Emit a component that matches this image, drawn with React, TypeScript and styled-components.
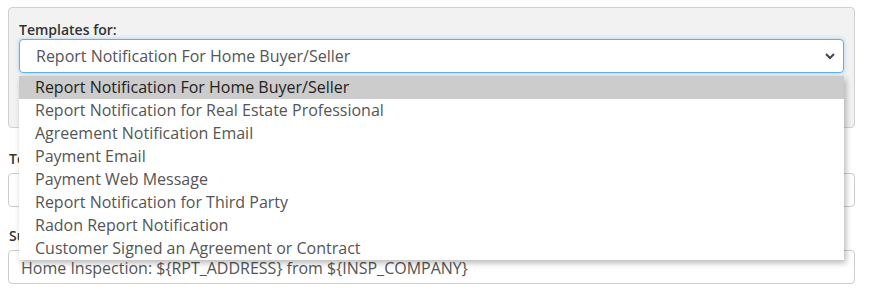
import React from "react";
import styled, { createGlobalStyle } from "styled-components";

const Global = createGlobalStyle`
  html, body { margin: 0; padding: 0; background: #fff; }
  body { font-family: "Open Sans", "Noto Sans", sans-serif; }
`;

const Page = styled.div`
  padding: 7px 27px 0 8px;
  display: flex;
  flex-direction: column;
`;

const Panel = styled.div`
  position: relative;
  background: #f2f2f2;
  border: 1px solid #d0d0d0;
  border-radius: 4px;
  padding: 13px 10px 0 10px;
  height: 106px;
  display: flex;
  flex-direction: column;
`;

const Label = styled.label`
  font-size: 14px;
  font-weight: 600;
  color: #333;
  line-height: 18px;
  margin-bottom: 0;
  display: block;
`;

const SelectBox = styled.div`
  height: 32px;
  border: 1px solid #66afe9;
  border-radius: 4px;
  background: #fff;
  box-shadow: 0 0 4px rgba(102, 175, 233, 0.5);
  display: flex;
  align-items: center;
  justify-content: space-between;
  padding: 0 8px 0 16px;
  font-size: 16px;
  color: #555;
`;

const Chevron = styled.svg`
  width: 10px;
  height: 8px;
`;

const Menu = styled.ul`
  position: absolute;
  left: 10px;
  right: 10px;
  top: 68px;
  margin: 0;
  padding: 0;
  list-style: none;
  background: #fff;
  box-shadow: 2px 3px 6px rgba(0, 0, 0, 0.28);
  z-index: 10;
`;

const Item = styled.li<{ $active?: boolean }>`
  height: 23px;
  line-height: 23px;
  padding-left: 16px;
  font-size: 16px;
  white-space: nowrap;
  color: ${(p) => (p.$active ? "#222" : "#555")};
  background: ${(p) => (p.$active ? "#cccccc" : "#fff")};
`;

const Field = styled.div<{ $gap: number }>`
  display: flex;
  flex-direction: column;
  margin-top: ${(p) => p.$gap}px;
`;

const FieldLabel = styled(Label)`
  margin: 0 0 5px 1px;
`;

const Input = styled.div`
  border: 1px solid #ccc;
  border-radius: 4px;
  background: #fff;
  display: flex;
  align-items: center;
  padding: 2px 12px 0;
  box-sizing: border-box;
  height: 34px;
  font-size: 16px;
  color: #555;
  white-space: nowrap;
`;

const items = [
  "Report Notification For Home Buyer/Seller",
  "Report Notification for Real Estate Professional",
  "Agreement Notification Email",
  "Payment Email",
  "Payment Web Message",
  "Report Notification for Third Party",
  "Radon Report Notification",
  "Customer Signed an Agreement or Contract",
];

export default function App() {
  return (
    <>
      <Global />
      <Page>
        <Panel>
          <Label>Templates for:</Label>
          <SelectBox>
            <span>Report Notification For Home Buyer/Seller</span>
            <Chevron viewBox="0 0 10 8">
              <path d="M1 2 L5 6 L9 2" fill="none" stroke="#444" strokeWidth="2" />
            </Chevron>
          </SelectBox>
          <Menu>
            {items.map((t, i) => (
              <Item key={t} $active={i === 0}>
                {t}
              </Item>
            ))}
          </Menu>
        </Panel>
        <Field $gap={22}>
          <FieldLabel>Template Name:</FieldLabel>
          <Input />
        </Field>
        <Field $gap={20}>
          <FieldLabel>Subject:</FieldLabel>
          <Input>Home Inspection: ${"{RPT_ADDRESS}"} from ${"{INSP_COMPANY}"}</Input>
        </Field>
      </Page>
    </>
  );
}
